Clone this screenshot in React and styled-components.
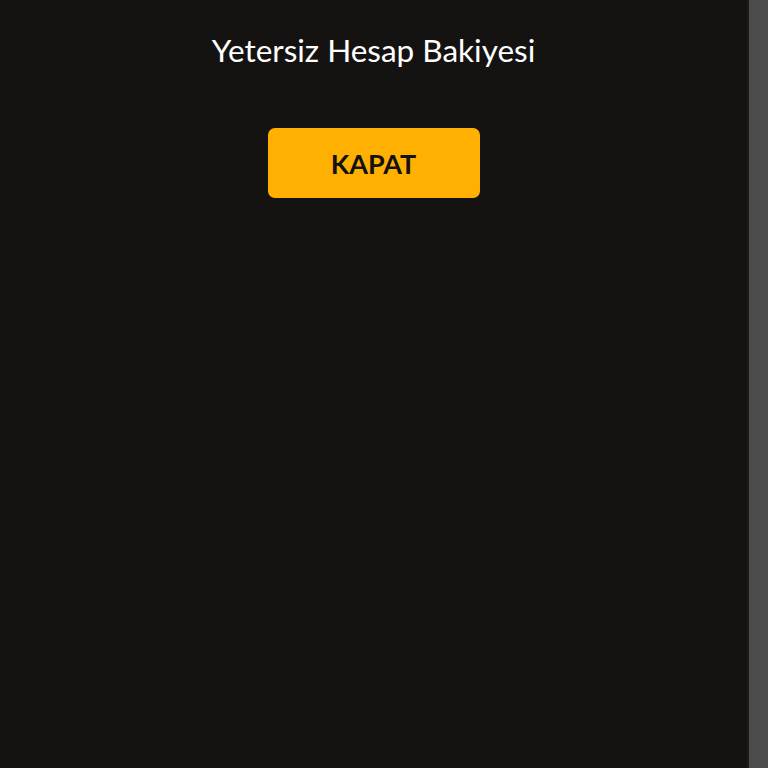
import React from "react"
import styled, { createGlobalStyle } from "styled-components"

const GlobalStyle = createGlobalStyle`
  html, body {
    margin: 0;
    padding: 0;
    background: #151312;
  }
  body {
    font-family: Lato, "Noto Sans", sans-serif;
  }
`

const Screen = styled.div`
  display: flex;
  width: 768px;
  height: 768px;
  overflow: hidden;
`

const Content = styled.main`
  flex: 1;
  display: flex;
  flex-direction: column;
  align-items: center;
  padding-top: 30px;
  background: #151312;
`

const Rail = styled.div`
  width: 19px;
  background: #4b4b4b;
  border-left: 2px solid #1c1a19;
`

const Title = styled.h2`
  margin: 0;
  font-size: 31.5px;
  font-weight: 400;
  line-height: 40px;
  color: #ffffff;
`

const CloseButton = styled.button`
  margin-top: 58px;
  width: 212px;
  height: 70px;
  border: none;
  border-radius: 7px;
  background: #ffb000;
  color: #121212;
  font-family: Lato, "Noto Sans", sans-serif;
  font-size: 27px;
  font-weight: 700;
  cursor: pointer;
`

const App = () => (
  <>
    <GlobalStyle />
    <Screen>
      <Content>
        <Title>Yetersiz Hesap Bakiyesi</Title>
        <CloseButton>KAPAT</CloseButton>
      </Content>
      <Rail />
    </Screen>
  </>
)

export default App
